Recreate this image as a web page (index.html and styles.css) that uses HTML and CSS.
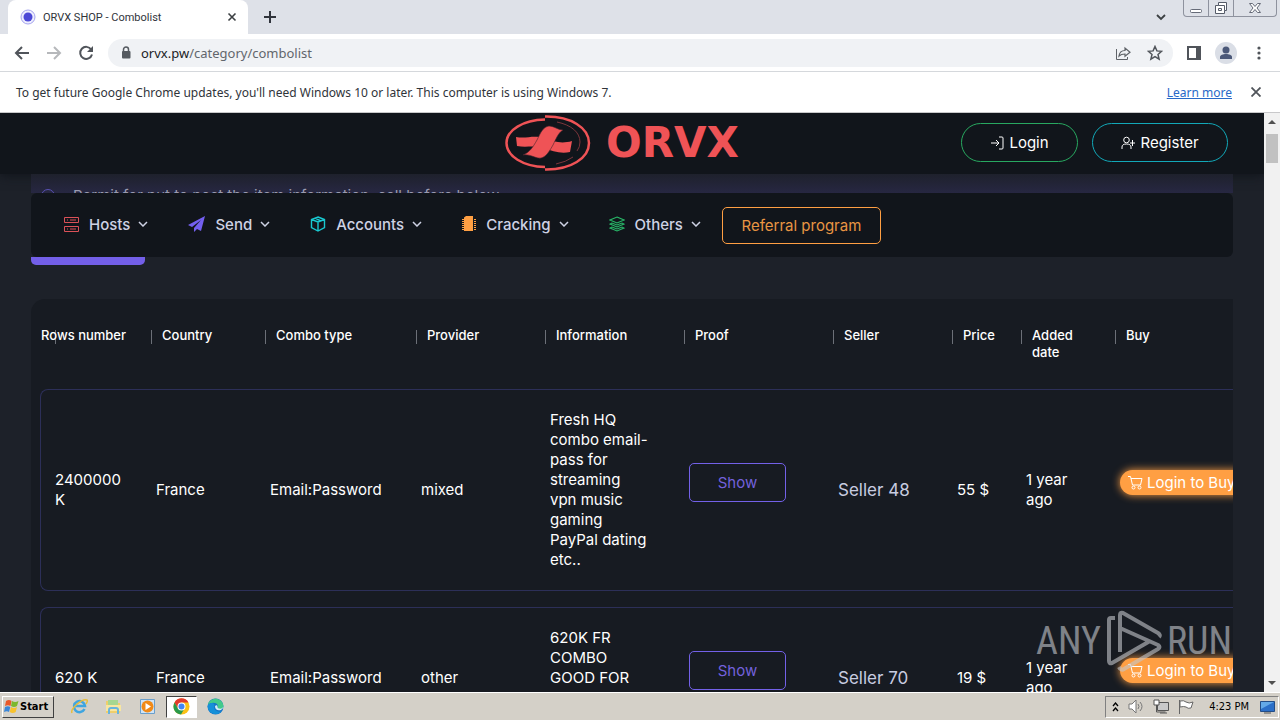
FILE: index.html
```html
<!DOCTYPE html>
<html lang="en">
<head>
<meta charset="utf-8">
<title>ORVX SHOP - Combolist</title>
<link rel="stylesheet" href="styles.css">
</head>
<body>
<div class="tabstrip">
  <div class="tab">
    <svg class="favicon" viewBox="0 0 16 16"><circle cx="8" cy="8" r="7" fill="#eeeefe" stroke="#a5a5ee"/><circle cx="8" cy="8" r="4.5" fill="#4d49d6"/></svg>
    <span class="tab-title">ORVX SHOP - Combolist</span>
    <button class="plain" aria-label="Close tab"><svg width="10" height="10" viewBox="0 0 10 10"><path d="M1.5 1.5l7 7M8.5 1.5l-7 7" stroke="#3c4043" stroke-width="1.6"/></svg></button>
  </div>
  <button class="plain new-tab" aria-label="New tab"><svg width="12" height="12" viewBox="0 0 12 12"><path d="M6 0v12M0 6h12" stroke="#30343c" stroke-width="2"/></svg></button>
  <button class="plain tab-search" aria-label="Search tabs"><svg width="10" height="7" viewBox="0 0 10 7"><path d="M1 1l4 4 4-4" fill="none" stroke="#3c4043" stroke-width="1.8"/></svg></button>
  <div class="window-controls">
    <button class="wc" aria-label="Minimize"><svg width="14" height="14" viewBox="0 0 14 14"><rect x="1.500" y="8.500" width="11" height="3" rx="1" fill="#fff" stroke="#666b78"/></svg></button>
    <button class="wc" aria-label="Restore"><svg width="14" height="14" viewBox="0 0 14 14"><path d="M4.500 1.500h8v8h-2v3h-9v-8h3z" fill="#fff" stroke="#555b68"/><path d="M4.500 4.500h6v5M4.500 7.500h3v2h-3z" fill="none" stroke="#555b68"/></svg></button>
    <button class="wc wide" aria-label="Close"><svg width="14" height="14" viewBox="0 0 14 14"><path d="M1.500 2.500h3l2.500 3 2.500-3h3l-3.500 4.500 3.500 4.500h-3l-2.500-3-2.500 3h-3l3.500-4.500z" fill="#fff" stroke="#666b78"/></svg></button>
  </div>
</div>
<div class="toolbar">
  <button class="plain nav-btn" aria-label="Back"><svg width="16" height="16" viewBox="0 0 16 16"><path d="M15 8H2M8 2L2 8l6 6" fill="none" stroke="#50545a" stroke-width="2"/></svg></button>
  <button class="plain nav-btn" aria-label="Forward"><svg width="16" height="16" viewBox="0 0 16 16"><path d="M1 8h13M8 2l6 6-6 6" fill="none" stroke="#b6b8bb" stroke-width="2"/></svg></button>
  <button class="plain nav-btn" aria-label="Reload"><svg width="16" height="16" viewBox="0 0 16 16"><path d="M13.200 4.500A6 6 0 1 0 14 9.500" fill="none" stroke="#50545a" stroke-width="2"/><path d="M15 1v6H9z" fill="#50545a"/></svg></button>
  <div class="omnibox">
    <svg width="10" height="14" viewBox="0 0 10 14"><path d="M2.500 6V3.500a2.500 2.500 0 0 1 5 0V6" fill="none" stroke="#555a60" stroke-width="1.500"/><rect x="1" y="5" width="8.500" height="7.500" rx="1" fill="#555a60"/></svg>
    <span class="url"><b>orvx.pw</b>/category/combolist</span>
    <button class="plain" aria-label="Share"><svg width="16" height="16" viewBox="0 0 16 16"><path d="M1.500 4v10.500h11V12" fill="none" stroke="#5f6368"/><path d="M4 11c.5-4 2.500-5.500 6-5.500V3l5 4.200-5 4V9C7 9 5.500 9.500 4 11z" fill="none" stroke="#5f6368" stroke-width="1.200"/></svg></button>
    <button class="plain star" aria-label="Bookmark"><svg width="16" height="16" viewBox="0 0 16 16"><path d="M8 1.500l1.900 4.400 4.700.4-3.600 3.100 1.100 4.700L8 11.600l-4.100 2.500L5 9.400 1.400 6.300l4.700-.4z" fill="none" stroke="#50545a" stroke-width="1.500"/></svg></button>
  </div>
  <button class="plain side" aria-label="Side panel"><svg width="14" height="14" viewBox="0 0 14 14"><rect x="1" y="1" width="12" height="12" fill="#fff" stroke="#50545a" stroke-width="2"/><path d="M9 1h4v12H9z" fill="#50545a"/></svg></button>
  <button class="plain" aria-label="Profile"><svg width="22" height="22" viewBox="0 0 22 22"><circle cx="11" cy="11" r="11" fill="#dadee6"/><circle cx="11" cy="8" r="3.500" fill="#4b5878"/><path d="M5 17v-2c0-2 3-3 6-3s6 1 6 3v2z" fill="#4b5878"/></svg></button>
  <button class="plain dots" aria-label="Menu"><svg width="4" height="14" viewBox="0 0 4 14"><g fill="#50545a"><circle cx="2" cy="2" r="1.600"/><circle cx="2" cy="7" r="1.600"/><circle cx="2" cy="12" r="1.600"/></g></svg></button>
</div>
<div class="infobar">
  <span>To get future Google Chrome updates, you'll need Windows 10 or later. This computer is using Windows 7.</span>
  <a href="#">Learn more</a>
  <button class="plain" aria-label="Dismiss"><svg width="10" height="10" viewBox="0 0 10 10"><path d="M.5.5l9 9M9.500.5l-9 9" stroke="#50545a" stroke-width="1.800"/></svg></button>
</div>
<div class="viewport">
  <div class="page">
    <header class="site-header">
      <div class="logo">
        <svg width="86" height="56" viewBox="0 0 86 56"><g fill="none" stroke="#ef5356"><path d="M40 4.500C18 5 1.500 15 1.500 28S18 51.500 40 52" stroke-width="2.500"/><path d="M40 1.500C66 1 84 13 84 28S66 55 40 54.500" stroke-width="2.500"/><path d="M52 7c14 3 23 10 23 20q0 5-3 9M68 42q-7 5-17 7" stroke="#7c353b" stroke-width="1"/></g><path d="M11 22c10 2 17-2 28 1 10 4 18 6 28 3l-2 11c-10 2-17-1-27-4-9-3-17 0-26-2z" fill="#ef5356"/><path d="M44 11c5 0 9 4 14 4-5 3-7 9-10 15-5 9-9 14-15 13-5-1-9-4-15-3 7-3 10-8 14-15 4-8 6-13 12-14z" fill="#ef5356" stroke="#44242b" stroke-width="0.600"/></svg>
        <span>ORVX</span>
      </div>
      <div class="auth">
        <button class="pill login"><svg width="14" height="14" viewBox="0 0 14 14"><path d="M1 7h8M6 4l3 3-3 3M9 1h3q1 0 1 1v10q0 1-1 1H9" fill="none" stroke="#fff"/></svg>Login</button>
        <button class="pill register"><svg width="14" height="14" viewBox="0 0 14 14"><circle cx="5.500" cy="4" r="2.800" fill="none" stroke="#fff"/><path d="M1 13V11q0-3 4.500-3t4.500 3v2M11.500 4v6M9 7h5" fill="none" stroke="#fff"/></svg>Register</button>
      </div>
    </header>
    <div class="alert"><span class="alert-dot"></span><span>Permit for put to post the item information, call before below.</span></div>
    <nav class="menu">
      <button class="item"><svg width="15" height="15" viewBox="0 0 15 15"><path d="M.5.5h14v5H.5zM.5 9.500h14v5H.5zM3 3h1M6 3h6M3 12h1M6 12h6" fill="none" stroke="#dc5158"/></svg>Hosts<svg class="chev" viewBox="0 0 10 6"><path d="M1 1l4 4 4-4"/></svg></button>
      <button class="item"><svg width="17" height="16" viewBox="0 0 17 16"><path d="M17 0L0 9l4 2L13 4 6 12v4l3-3 4 2z" fill="#735ff0"/></svg>Send<svg class="chev" viewBox="0 0 10 6"><path d="M1 1l4 4 4-4"/></svg></button>
      <button class="item"><svg width="16" height="16" viewBox="0 0 16 16"><path d="M8 1l6.500 2.500v8L8 15l-6.500-3.500v-8zM1.500 3.500L8 6l6.500-2.500M8 6v9M5 2.200L11 5" fill="none" stroke="#19c8d0" stroke-width="1.400"/></svg>Accounts<svg class="chev" viewBox="0 0 10 6"><path d="M1 1l4 4 4-4"/></svg></button>
      <button class="item"><svg width="14" height="16" viewBox="0 0 14 16"><path d="M2 1.500L4 0h7v15H2z" fill="#ff9f43"/><path d="M1 3v12M13 3v12" stroke="#ff9f43" stroke-width="2" stroke-dasharray="1 1"/></svg>Cracking<svg class="chev" viewBox="0 0 10 6"><path d="M1 1l4 4 4-4"/></svg></button>
      <button class="item"><svg width="16" height="16" viewBox="0 0 16 16"><path d="M8 1l7 3-7 3-7-3zM3 7L1 8l7 3 7-3-2-1-5 2zM3 11l-2 1 7 3 7-3-2-1-5 2z" fill="none" stroke="#28b868" stroke-width="1.100"/></svg>Others<svg class="chev" viewBox="0 0 10 6"><path d="M1 1l4 4 4-4"/></svg></button>
      <button class="referral">Referral program</button>
    </nav>
    <div class="underlay"></div>
    <section class="card">
      <table>
        <colgroup><col class="c1"><col class="c2"><col class="c3"><col class="c4"><col class="c5"><col class="c6"><col class="c7"><col class="c8"><col class="c9"><col></colgroup>
        <thead><tr><th class="first">Rows number</th><th>Country</th><th>Combo type</th><th>Provider</th><th>Information</th><th>Proof</th><th>Seller</th><th>Price</th><th>Added date</th><th>Buy</th></tr></thead>
        <tbody>
          <tr><td>2400000 K</td><td>France</td><td>Email:Password</td><td>mixed</td><td class="info">Fresh HQ<br>combo email-<br>pass for<br>streaming<br>vpn music<br>gaming<br>PayPal dating<br>etc..</td><td><button class="show">Show</button></td><td class="seller">Seller 48</td><td>55 $</td><td>1 year ago</td><td><button class="buy"><svg width="15" height="15" viewBox="0 0 15 15"><path d="M0 1.500h2.500L4.500 10h8L14 3.500H3" fill="none" stroke="#fff"/><circle cx="5.500" cy="12.500" r="1.500" fill="none" stroke="#fff"/><circle cx="11.500" cy="12.500" r="1.500" fill="none" stroke="#fff"/></svg>Login to Buy</button></td></tr>
          <tr><td>620 K</td><td>France</td><td>Email:Password</td><td>other</td><td class="info">620K FR<br>COMBO<br>GOOD FOR<br><br><br></td><td><button class="show">Show</button></td><td class="seller">Seller 70</td><td>19 $</td><td>1 year ago</td><td><button class="buy"><svg width="15" height="15" viewBox="0 0 15 15"><path d="M0 1.500h2.500L4.500 10h8L14 3.500H3" fill="none" stroke="#fff"/><circle cx="5.500" cy="12.500" r="1.500" fill="none" stroke="#fff"/><circle cx="11.500" cy="12.500" r="1.500" fill="none" stroke="#fff"/></svg>Login to Buy</button></td></tr>
        </tbody>
      </table>
    </section>
  </div>
  <div class="scrollbar">
    <svg width="8" height="4" viewBox="0 0 8 4"><path d="M0 4l4-4 4 4z" fill="#505050"/></svg>
    <div class="thumb"></div>
    <svg class="down" width="8" height="4" viewBox="0 0 8 4"><path d="M0 0l4 4 4-4z" fill="#505050"/></svg>
  </div>
  <div class="watermark"><span>ANY</span><svg width="56" height="64" viewBox="0 0 56 64"><path d="M14 43V6q0-3 3-2l35 20q3 2 1 4M14 19l38 17q3 2 0 4L18 60q-3 2-5-2M9 9H5q-2 0-2 2v41q0 3 3 2L44 32" fill="none" stroke="#c4c7cc" stroke-width="4" stroke-linejoin="round"/></svg><span>RUN</span></div>
</div>
<footer class="taskbar">
  <button class="start"><svg width="15" height="15" viewBox="0 0 15 15"><path d="M2 2q3-2 5.500 0L6.500 7Q4 5.500 1 7z" fill="#e8582a"/><path d="M8 2q3 2 6.500 0L13 7q-3 2-6 0z" fill="#7cb82f"/><path d="M1 8q3-1.500 5.300 0L5 13q-2-1.500-5 0z" fill="#3a86d8"/><path d="M7 8q3 2 6 0l-1.300 5q-3 2-6 0z" fill="#f8c22d"/></svg>Start</button>
  <button class="task" aria-label="Internet Explorer"><svg width="17" height="17" viewBox="0 0 17 17"><path d="M13.500 11A5.500 5.500 0 1 1 14 8H4" fill="none" stroke="#3fa5e0" stroke-width="2.500"/><path d="M1 15C-1 11 11 0 16 2q1 1-1 4" fill="none" stroke="#e8bd3c" stroke-width="1.500"/></svg></button>
  <button class="task" aria-label="Explorer"><svg width="17" height="17" viewBox="0 0 17 17"><path d="M1 3h5l1 2h8v10H1z" fill="#efce6a"/><path d="M3 2h10v5H3z" fill="#a6d790"/><path d="M1 7h15v6H1z" fill="#f8e6a0"/><path d="M4 16v-4q0-2 2-2h5q2 0 2 2v4" fill="none" stroke="#68b4dd" stroke-width="2"/></svg></button>
  <button class="task" aria-label="Media Player"><svg width="17" height="17" viewBox="0 0 17 17"><path d="M1.500 1.500h14v14h-14z" fill="#cfe4f7" stroke="#6a9fcb"/><circle cx="8.500" cy="8.500" r="6" fill="#f18a17"/><path d="M6.500 5l5.500 3.500L6.500 12z" fill="#fff"/></svg></button>
  <button class="task active" aria-label="Chrome"><svg width="17" height="17" viewBox="0 0 17 17"><circle cx="8.500" cy="8.500" r="8" fill="#fbc116"/><path d="M1.500 4.500a8 8 0 0 1 14 0h-7L5 10.500z" fill="#e33b2e"/><path d="M1.500 4.500a8 8 0 0 0 6.500 12l3.500-6H5z" fill="#29994b"/><circle cx="8.500" cy="8.500" r="4" fill="#fff"/><circle cx="8.500" cy="8.500" r="3" fill="#4285f4"/></svg></button>
  <button class="task" aria-label="Edge"><svg width="17" height="17" viewBox="0 0 17 17"><circle cx="8.500" cy="8.500" r="8" fill="#1673c7"/><path d="M1 7C2-1 15-2 16.500 8c0 4-6 4-6 1 2-4-6-6-9.500-2z" fill="#42ca8b"/><path d="M1 7c4-4 8-1 6 2 0 3 4 6 8 4-6 7-16 1-14-6z" fill="#1590d8"/><path d="M8 8c0 4 3 5 6 4q3-2 2.500-4c-1 4-6 3-6 1 0-2-1-2-2.500-1z" fill="#d5edf4"/></svg></button>
  <div class="tray">
    <svg width="7" height="10" viewBox="0 0 7 10"><path d="M1 4l2.500-3L6 4M1 9l2.500-3L6 9" fill="none" stroke="#000" stroke-width="1.300"/></svg>
    <svg width="16" height="15" viewBox="0 0 16 15"><path d="M1 5h3l4-4v13l-4-4H1z" fill="#fff" stroke="#777"/><path d="M10 5q2 2.500 0 5M12 3q4 4.500 0 9" fill="none" stroke="#777"/></svg>
    <svg width="16" height="15" viewBox="0 0 16 15"><path d="M4.500 3.500h11v8h-11z" fill="#c9c9c9" stroke="#555"/><path d="M1 1h5v5H1z" fill="#fff" stroke="#555"/><path d="M3.500 6v7h9M7 14h7" fill="none" stroke="#555"/></svg>
    <svg width="16" height="15" viewBox="0 0 16 15"><path d="M1.500 1v14M2 2q4-1 6 1 3 2 7 0l-2 6q-3 1-5-1-2-1-6 0z" fill="#fff" stroke="#666"/></svg>
    <span class="clock">4:23 PM</span>
    <svg width="15" height="14" viewBox="0 0 15 14"><path d="M.5 1.500h14v10H.5z" fill="#2b6fc8" stroke="#234d86"/><path d="M1 2h13L1 9z" fill="#63a9e8"/><path d="M4 13h7" stroke="#555"/></svg>
  </div>
</footer>
</body>
</html>
```
FILE: styles.css
```css
* { box-sizing: border-box; }
body {
  margin: 0;
  height: 100vh;
  display: flex;
  flex-direction: column;
  overflow: hidden;
  font-family: "DejaVu Sans Condensed", "Noto Sans", sans-serif;
  font-size: 12px;
  color: #30343a;
}
button { font: inherit; color: inherit; margin: 0; white-space: nowrap; }
svg { display: block; flex: none; }
.plain { border: 0; background: none; padding: 0; }

/* browser frame */
.tabstrip { height: 34px; flex: none; display: flex; align-items: center; background: #dee1e8; padding-left: 8px; }
.tab { display: flex; align-items: center; gap: 7px; width: 240px; height: 34px; padding: 0 11px 0 12px; background: #fff; border-radius: 8px 8px 0 0; }
.favicon { width: 16px; height: 16px; }
.tab-title { flex: 1; font-family: Roboto, sans-serif; font-size: 11px; white-space: nowrap; }
.new-tab { margin-left: 16px; }
.tab-search { margin-left: auto; margin-right: 17px; }
.window-controls { display: flex; align-self: flex-start; height: 17px; margin-right: 3px; border: 1px solid #8e929e; border-top: 0; border-radius: 0 0 4px 4px; }
.wc { width: 25px; padding: 0; border: 0; border-right: 1px solid #8e929e; background: none; display: grid; place-items: center; }
.wc.wide { width: 42px; border-right: 0; }
.toolbar { height: 38px; flex: none; display: flex; align-items: center; background: #fff; border-bottom: 1px solid #d5d8dc; padding: 0 19px 0 14px; }
.nav-btn { margin-right: 16px; }
.omnibox { flex: 1; height: 28px; margin-right: 14px; margin-left: -2px; padding: 0 10px 0 13px; display: flex; align-items: center; gap: 10px; border-radius: 14px; background: #f0f2f5; }
.url { flex: 1; font-family: "Noto Sans", sans-serif; font-size: 13px; color: #62666c; }
.url b { font-weight: 400; color: #202226; }
.star { margin-left: 6px; }
.side { margin-right: 14px; }
.dots { margin-left: 20px; }
.infobar { height: 41px; flex: none; display: flex; align-items: center; padding: 0 19px 0 16px; background: #fff; border-bottom: 1px solid #c8c8ca; font-family: "Noto Sans", sans-serif; }
.infobar span { flex: 1; }
.infobar a { color: #2969c8; margin-right: 19px; }

/* site */
.viewport { position: relative; flex: 1; min-height: 0; display: flex; background: #1d2129; }
.page { flex: 1; min-width: 0; overflow: hidden; font-family: Inter, "Open Sans", sans-serif; font-size: 15px; color: #fff; }
.site-header { display: grid; grid-template-columns: 1fr auto 1fr; align-items: center; height: 61px; padding: 0 36px 2px 31px; background: #11151b; box-shadow: 0 2px 10px #11151b; }
.logo { grid-column: 2; display: flex; align-items: center; width: 250px; color: #ef5356; font: 700 42px/56px "DejaVu Sans", sans-serif; }
.logo span { flex: 1; text-align: center; }
.auth { display: flex; justify-content: flex-end; gap: 14px; }
.pill { display: flex; align-items: center; justify-content: center; gap: 5px; height: 39px; border-radius: 20px; background: none; color: #fff; }
.login { width: 117px; border: 1px solid #28a860; }
.register { width: 136px; border: 1px solid #12a8b8; }
.alert { display: flex; align-items: flex-start; gap: 18px; height: 19px; margin: 0 31px; padding: 13px 10px 0; overflow: hidden; background: linear-gradient(#1e212c, #272742); color: #9a9bb0; line-height: 18px; }
.alert-dot { width: 14px; height: 14px; margin-top: 2px; border: 1px solid #5951b4; border-radius: 50%; }
.menu { display: flex; align-items: center; height: 64px; margin: 0 31px; padding: 0 33px; border-radius: 6px; background: #11151b; }
.item { display: flex; align-items: center; gap: 10px; margin-right: 40px; padding: 0 0 2px; border: 0; background: none; color: #ced2e4; font-weight: 500; }
.item .chev { width: 10px; height: 6px; margin-left: -2px; fill: none; stroke: #ced2e4; stroke-width: 1.5; }
.referral { width: 159px; height: 37px; margin-left: -19px; border: 1px solid #ff9f43; border-radius: 5px; background: none; color: #e99543; }
.underlay { width: 114px; height: 8px; margin-left: 31px; border-radius: 0 0 5px 5px; background: #735fe8; }
.card { margin: 34px 31px 0; padding: 0 0 40px 9px; overflow: hidden; border-radius: 14px 0 0 0; background: #171b22; }
table { width: 1240px; table-layout: fixed; border-collapse: separate; border-spacing: 0 16px; line-height: 20px; }
.c1 { width: 102px; } .c2 { width: 114px; } .c3 { width: 151px; } .c4 { width: 129px; } .c5 { width: 139px; }
.c6 { width: 149px; } .c7 { width: 119px; } .c8 { width: 69px; } .c9 { width: 94px; }
th { height: 58px; padding: 12px 16px 0 9px; text-align: left; vertical-align: top; font-size: 13px; font-weight: 500; line-height: 17px; background: linear-gradient(#6c7078, #6c7078) 9px 15px / 1px 14px no-repeat; }
th:not(.first) { padding-left: 20px; }
th.first { padding: 12px 0 0 1px; background-position: 15px 15px; }
td { padding: 20px 15px 20px 14px; border: solid #2c2f58; border-width: 1px 0; }
td:first-child { border-left-width: 1px; border-radius: 8px 0 0 8px; }
td:nth-child(n+5) { padding-right: 0; }
td:nth-child(9) { padding-right: 34px; }
.seller { font-size: 17px; color: #c8cce0; }
.show { display: block; width: 97px; height: 39px; margin-bottom: 15px; border: 1px solid #7361e8; border-radius: 5px; background: none; color: #7361dc; }
.buy { display: flex; align-items: center; gap: 4px; height: 25px; margin-bottom: 15px; padding: 0 14px 0 8px; border: 0; border-radius: 13px; background: #ff9f43; box-shadow: 0 0 8px #ff9f43; color: #fff; }
.scrollbar { flex: none; width: 16px; display: flex; flex-direction: column; align-items: center; background: #f1f1f1; padding: 7px 0; }
.thumb { width: 12px; height: 29px; margin-top: 10px; background: #c1c1c1; }
.down { margin-top: auto; }
.watermark { position: absolute; right: 48px; bottom: 19px; display: flex; align-items: center; gap: 5px; opacity: 0.6; color: #c4c7cc; font: 38px/64px "Liberation Sans Narrow", "Roboto Condensed", "Open Sans Condensed", Roboto, sans-serif; pointer-events: none; }

/* taskbar */
.taskbar { height: 28px; flex: none; display: flex; align-items: center; padding: 0 1px 0 2px; background: #d4d0c8; border-top: 1px solid #fff; color: #000; }
.start { display: flex; align-items: center; gap: 1px; width: 52px; height: 22px; margin-right: 10px; padding: 0 1px; border: 1px solid; border-color: #fff #404040 #404040 #fff; background: #d4d0c8; font: 700 11px "DejaVu Sans Condensed", sans-serif; }
.task { display: grid; place-items: center; width: 31px; height: 22px; margin-right: 3px; padding: 0; border: 0; background: none; }
.task.active { border: 1px solid; border-color: #404040 #fff #fff #404040; background: #fff; }
.tray { display: flex; align-items: center; gap: 9px; height: 22px; margin-left: auto; padding: 0 3px 0 6px; border: 1px solid; border-color: #808080 #fff #fff #808080; font-size: 11px; }
.clock { margin: 0 2px 0 6px; }
```
